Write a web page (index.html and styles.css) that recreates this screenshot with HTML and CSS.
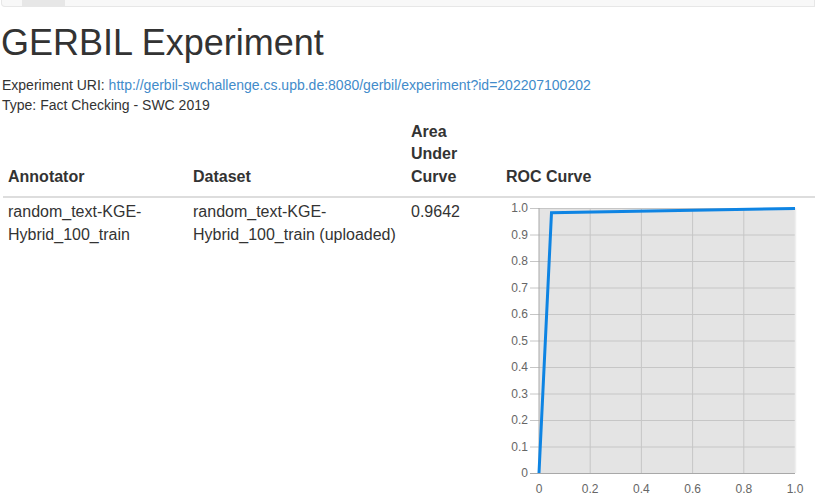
FILE: index.html
```html
<!DOCTYPE html>
<html>
<head>
<meta charset="utf-8">
<link rel="stylesheet" href="styles.css">
</head>
<body>
<div class="navbar"><div class="tab"></div></div>
<div class="page">
  <h1 class="title">GERBIL Experiment</h1>
  <div class="meta">Experiment URI: <a class="link" href="#">http://gerbil-swchallenge.cs.upb.de:8080/gerbil/experiment?id=202207100202</a></div>
  <div class="meta">Type: Fact Checking - SWC 2019</div>
  <table class="results">
    <thead>
      <tr>
        <th class="c1">Annotator</th>
        <th class="c2">Dataset</th>
        <th class="c3">Area Under Curve</th>
        <th class="c4">ROC Curve</th>
      </tr>
    </thead>
    <tbody>
      <tr>
        <td>random_text-KGE-Hybrid_100_train</td>
        <td>random_text-KGE-Hybrid_100_train (uploaded)</td>
        <td>0.9642</td>
        <td class="chart-cell">
          <svg class="chart" width="310" height="302" viewBox="0 0 310 302">
            <rect x="34" y="8" width="256" height="265" fill="#e4e4e4"/>
            <g stroke="#c6c6c6" stroke-width="1">
              <line x1="85.2" y1="8" x2="85.2" y2="273"/>
              <line x1="136.4" y1="8" x2="136.4" y2="273"/>
              <line x1="187.6" y1="8" x2="187.6" y2="273"/>
              <line x1="238.8" y1="8" x2="238.8" y2="273"/>
              <line x1="25" y1="8.5" x2="290" y2="8.5"/>
              <line x1="25" y1="35" x2="290" y2="35"/>
              <line x1="25" y1="61.5" x2="290" y2="61.5"/>
              <line x1="25" y1="88" x2="290" y2="88"/>
              <line x1="25" y1="114.5" x2="290" y2="114.5"/>
              <line x1="25" y1="141" x2="290" y2="141"/>
              <line x1="25" y1="167.5" x2="290" y2="167.5"/>
              <line x1="25" y1="194" x2="290" y2="194"/>
              <line x1="25" y1="220.5" x2="290" y2="220.5"/>
              <line x1="25" y1="247" x2="290" y2="247"/>
            </g>
            <line x1="290.5" y1="8" x2="290.5" y2="273" stroke="#efefef" stroke-width="1.5"/>
            <line x1="34" y1="8" x2="34" y2="273.5" stroke="#a8a8a8" stroke-width="1"/>
            <line x1="25" y1="273.5" x2="290" y2="273.5" stroke="#a8a8a8" stroke-width="1"/>
            <polyline points="34,273 46.5,12.7 290,8.5" fill="none" stroke="#0e84e3" stroke-width="3" stroke-linejoin="miter"/>
            <g class="ylab" text-anchor="end">
              <text x="23" y="12.3">1.0</text>
              <text x="23" y="38.8">0.9</text>
              <text x="23" y="65.3">0.8</text>
              <text x="23" y="91.8">0.7</text>
              <text x="23" y="118.3">0.6</text>
              <text x="23" y="144.8">0.5</text>
              <text x="23" y="171.3">0.4</text>
              <text x="23" y="197.8">0.3</text>
              <text x="23" y="224.3">0.2</text>
              <text x="23" y="250.8">0.1</text>
              <text x="23" y="277.3">0</text>
            </g>
            <g class="xlab" text-anchor="middle">
              <text x="34" y="292.7">0</text>
              <text x="85.2" y="292.7">0.2</text>
              <text x="136.4" y="292.7">0.4</text>
              <text x="187.6" y="292.7">0.6</text>
              <text x="238.8" y="292.7">0.8</text>
              <text x="290" y="292.7">1.0</text>
            </g>
          </svg>
        </td>
      </tr>
    </tbody>
  </table>
</div>
</body>
</html>
```

FILE: styles.css
```css
html, body {
  margin: 0;
  padding: 0;
  overflow: hidden;
  background: #fff;
}
body {
  font-family: "Liberation Sans", Arial, sans-serif;
  font-size: 14px;
  line-height: 20px;
  color: #333;
}
.navbar {
  display: flex;
  height: 6px;
  margin-left: 1px;
  background: #f8f8f8;
  border: 1px solid #e7e7e7;
  border-top: none;
  border-radius: 0 0 0 4px;
}
.tab {
  margin-left: 20px;
  width: 43px;
  background: #e7e7e7;
}
.page {
  padding-left: 2px;
}
.title {
  margin: 16px 0 12px -1px;
  font-size: 36px;
  font-weight: 400;
  line-height: 39.6px;
  color: #333;
}
.meta {
  margin: 0;
}
.link {
  color: #428bca;
  text-decoration: none;
}
.results {
  margin-top: 1px;
  margin-left: 1px;
  border-collapse: collapse;
  border-spacing: 0;
  width: 812px;
  font-size: 16px;
  line-height: 22.86px;
  table-layout: fixed;
}
.results th {
  text-align: left;
  vertical-align: bottom;
  font-weight: 700;
  padding: 5px 5px 7px;
  border-bottom: 2px solid #ddd;
}
.results td {
  vertical-align: top;
  padding: 3px 5px 5px;
}
.c1 { width: 175px; }
.c2 { width: 208px; }
.c3 { width: 85px; }
.c4 { width: auto; }
.results .chart-cell {
  padding-top: 2px;
}
.chart {
  display: block;
  overflow: visible;
  margin-left: -1px;
}
.ylab text, .xlab text {
  font-family: "Liberation Sans", Arial, sans-serif;
  font-size: 12px;
  fill: #666;
}
```
